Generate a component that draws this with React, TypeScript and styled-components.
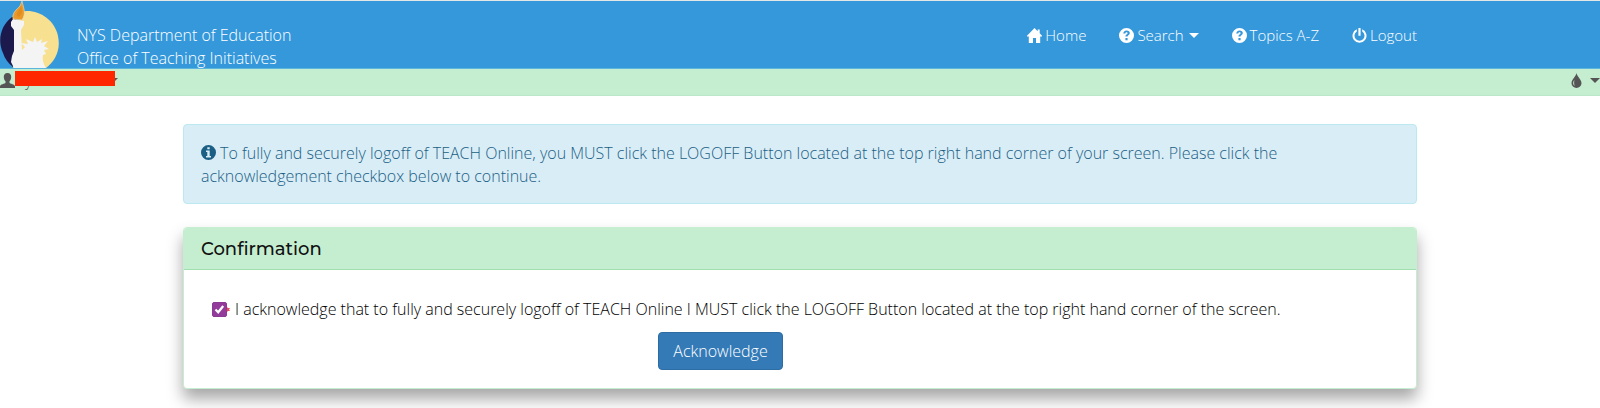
import React, { useState } from "react";
import styled, { createGlobalStyle } from "styled-components";

const GlobalStyle = createGlobalStyle`
  *, *::before, *::after { box-sizing: border-box; }
  body {
    margin: 0;
    background: #fff;
    color: #000;
    font-family: "Open Sans", "Noto Sans", sans-serif;
    font-size: 16px;
    font-weight: 300;
    line-height: 23px;
  }
`;

const Header = styled.header`
  display: grid;
  grid-template-columns: 77px 1fr auto;
  height: 69px;
  border-top: 1px solid #e4e6e8;
  border-bottom: 1px solid #5bb5dc;
  background: #3498db;
  color: #fff;
`;

const Logo = styled.svg`
  display: block;
  width: 59px;
  height: 67px;
`;

const Brand = styled.a`
  padding-top: 23px;
  color: #fff;
  text-decoration: none;
`;

const BrandLine = styled.span`
  display: block;
`;

const Nav = styled.nav`
  display: flex;
  gap: 33px;
  padding: 23px calc((100vw - min(1234px, 100vw - 32px)) / 2) 0 0;
`;

const NavLink = styled.a`
  display: flex;
  align-items: center;
  height: 22px;
  gap: 3px;
  color: #fff;
  font-size: 15px;
  text-decoration: none;
`;

const Icon = styled.svg`
  display: inline-block;
  flex: none;
  width: 15px;
  height: 15px;
  fill: currentColor;
`;

const Caret = styled.span`
  flex: none;
  margin-left: 2px;
  border: 5px solid transparent;
  border-top-color: currentColor;
  border-bottom-width: 0;
`;

const UserBar = styled.div`
  display: flex;
  align-items: flex-start;
  justify-content: space-between;
  height: 27px;
  border-bottom: 1px solid #bce8ca;
  background: #c5eed0;
  color: #555;
`;

const MenuButton = styled.button<{ $gap?: number }>`
  position: relative;
  display: flex;
  align-items: center;
  gap: ${(p) => p.$gap ?? 0}px;
  height: 23px;
  padding: 0;
  border: 0;
  background: none;
  color: inherit;
  font: inherit;
`;

const UserName = styled.span`
  width: 81px;
  margin-left: 10px;
  text-align: left;
`;

const Redaction = styled.span`
  position: absolute;
  top: 2px;
  left: 15px;
  width: 100px;
  height: 15px;
  background: #ff2600;
`;

const Page = styled.main`
  width: min(1234px, 100% - 32px);
  margin: 28px auto 0;
  padding-bottom: 32px;
`;

const Alert = styled.div`
  padding: 17px 17px 15px;
  border: 1px solid #bce8f1;
  border-radius: 4px;
  background: #d9edf7;
  color: #1b5f85;

  ${Icon} {
    margin-right: 4px;
    vertical-align: -1px;
  }
`;

const Panel = styled.section`
  margin-top: 23px;
  border: 1px solid #c5eed0;
  border-radius: 4px;
  background: #fff;
  box-shadow: 0 10px 16px rgba(0, 0, 0, 0.35);
`;

const PanelHeading = styled.h2`
  margin: 0;
  padding: 10px 17px 9px;
  border-bottom: 1px solid #9fdfb0;
  border-radius: 3px 3px 0 0;
  background: #c5eed0;
  color: #111;
  font: 500 18px/22px Montserrat, Inter, sans-serif;
`;

const PanelBody = styled.form`
  padding: 28px 28px 18px;
`;

const CheckLabel = styled.label`
  display: flex;
  align-items: center;
`;

const Tick = styled.span`
  display: grid;
  flex: none;
  width: 15px;
  margin-right: 8px;

  > * {
    grid-area: 1 / 1;
  }
`;

const Checkbox = styled.input`
  appearance: none;
  width: 15px;
  height: 15px;
  margin: 0;
  border: 1px solid #8a3a92;
  border-radius: 2px;
  background: #fff;

  &:checked {
    background: #933b9b;
  }
`;

const TickMark = styled.svg`
  width: 18px;
  height: 15px;
  pointer-events: none;
`;

const Actions = styled.div`
  display: flex;
  padding: 11px 0 0 446px;
`;

const SubmitButton = styled.button`
  width: 125px;
  height: 38px;
  padding: 0;
  border: 1px solid #2e6da4;
  border-radius: 4px;
  background: #337ab7;
  color: #fff;
  font: inherit;
`;

const QuestionIcon = () => (
  <Icon viewBox="0 0 15 15" aria-hidden="true">
    <path
      fillRule="evenodd"
      d="M7.5 0a7.5 7.5 0 1 1 0 15a7.5 7.5 0 0 1 0-15ZM4.3 5.6H6.4C6.4 4.7 6.8 4.3 7.5 4.3S8.6 4.7 8.6 5.2C8.6 6.3 6.4 6.3 6.4 8.6H8.5C8.5 7.4 10.8 7 10.8 5.1C10.8 3.4 9.5 2.4 7.6 2.4C5.5 2.4 4.3 3.7 4.3 5.6ZM6.4 10H8.6V12.2H6.4Z"
    />
  </Icon>
);

export default function App() {
  const [checked, setChecked] = useState(true);

  return (
    <>
      <GlobalStyle />
      <Header>
        <Logo viewBox="0 0 59 67" aria-hidden="true">
          <path d="M20 11C36 7 54 17 58 35C61 49 55 60 46 67H13L20 11Z" fill="#f7e08f" />
          <path d="M12 16C1 24-3 39 3 52C5 58 8 62 13 66L16 16Z" fill="#1c1a4c" />
          <path
            d="M13 18L11 21 11 25 14 29 14 50 12 55 11 61 14 67H46C43 62 42 58 43 54L46 53 44 49 49 48 44 45 48 40 41 42 42 38 37 41 35 36 33 41 26 38 28 43 21 42 25 46 22 49 21 29 24 24 24 20Z"
            fill="#f4f4f5"
          />
          <path d="M13 18C12 12 16 9 20 5L22 0 24 8C25 12 24 16 22 19Z" fill="#e99829" stroke="#eee1ba" strokeWidth="0.6" />
          <path d="M17 15C16 11 20 9 21 5C23 10 22 13 19 16Z" fill="#e08c20" />
        </Logo>
        <Brand href="#home">
          <BrandLine>NYS Department of Education</BrandLine>
          <BrandLine>Office of Teaching Initiatives</BrandLine>
        </Brand>
        <Nav>
          <NavLink href="#home">
            <Icon viewBox="0 0 15 15" aria-hidden="true">
              <path d="M7.5 0L10.7 3.3V1.5H12.7V5.3L15 7.8V8.5H13.2V15H9V10H6V15H1.8V8.5H0V7.8Z" />
            </Icon>
            Home
          </NavLink>
          <NavLink href="#search">
            <QuestionIcon />
            Search
            <Caret />
          </NavLink>
          <NavLink href="#topics">
            <QuestionIcon />
            Topics A-Z
          </NavLink>
          <NavLink href="#logout">
            <Icon viewBox="0 0 15 15" aria-hidden="true">
              <path d="M6.4 0H8.6V7.8H6.4ZM4.8 1.3V3.5A5 5 0 1 0 10.2 3.5V1.3A7 7 0 1 1 4.8 1.3Z" />
            </Icon>
            Logout
          </NavLink>
        </Nav>
      </Header>
      <UserBar>
        <MenuButton type="button" aria-label="User menu">
          <Icon viewBox="0 0 15 15" aria-hidden="true">
            <path d="M7.5 0C10.2 0 11.3 1.7 11.2 4C11.2 6 10.5 7.3 9.5 8.2V9.8C10 11 15 11.2 15 13.5V15H0V13.5C0 11.2 5 11 5.5 9.8V8.2C4.5 7.3 3.8 6 3.8 4C3.7 1.7 4.8 0 7.5 0Z" />
          </Icon>
          <UserName>y</UserName>
          <Caret />
          <Redaction />
        </MenuButton>
        <MenuButton type="button" aria-label="Theme" $gap={4}>
          <Icon viewBox="0 0 15 15" aria-hidden="true">
            <path
              fillRule="evenodd"
              d="M7.5 0C8 3.5 12.5 6.2 12.5 10.2A5 4.8 0 0 1 2.5 10.2C2.5 6.2 7 3.5 7.5 0ZM5.4 6.8C3.8 9 3.6 11.5 5.7 13C5 11 5 9 5.4 6.8Z"
            />
          </Icon>
          <Caret />
        </MenuButton>
      </UserBar>
      <Page>
        <Alert role="alert">
          <Icon viewBox="0 0 15 15" aria-hidden="true">
            <path
              fillRule="evenodd"
              d="M7.5 0a7.5 7.5 0 1 1 0 15a7.5 7.5 0 0 1 0-15ZM6.3 2.2V4.3H8.7V2.2ZM5 5.6V7H6.3V11H5V12.4H10V11H8.7V5.6Z"
            />
          </Icon>
          To fully and securely logoff of TEACH Online, you MUST click the LOGOFF Button located at the top
          right hand corner of your screen. Please click the acknowledgement checkbox below to continue.
        </Alert>
        <Panel>
          <PanelHeading>Confirmation</PanelHeading>
          <PanelBody onSubmit={(e) => e.preventDefault()}>
            <CheckLabel>
              <Tick>
                <Checkbox type="checkbox" checked={checked} onChange={(e) => setChecked(e.target.checked)} />
                <TickMark viewBox="0 0 18 15" aria-hidden="true">
                  <path d="M15 5L16 6 18 6 17 7.5 18 9 16 9 15 10Z" fill="#ee4b55" />
                  {checked && <path d="M3.5 7.5L6.2 10.3L11.2 4" fill="none" stroke="#fff" strokeWidth="2.2" />}
                </TickMark>
              </Tick>
              I acknowledge that to fully and securely logoff of TEACH Online I MUST click the LOGOFF Button
              located at the top right hand corner of the screen.
            </CheckLabel>
            <Actions>
              <SubmitButton type="submit">Acknowledge</SubmitButton>
            </Actions>
          </PanelBody>
        </Panel>
      </Page>
    </>
  );
}
